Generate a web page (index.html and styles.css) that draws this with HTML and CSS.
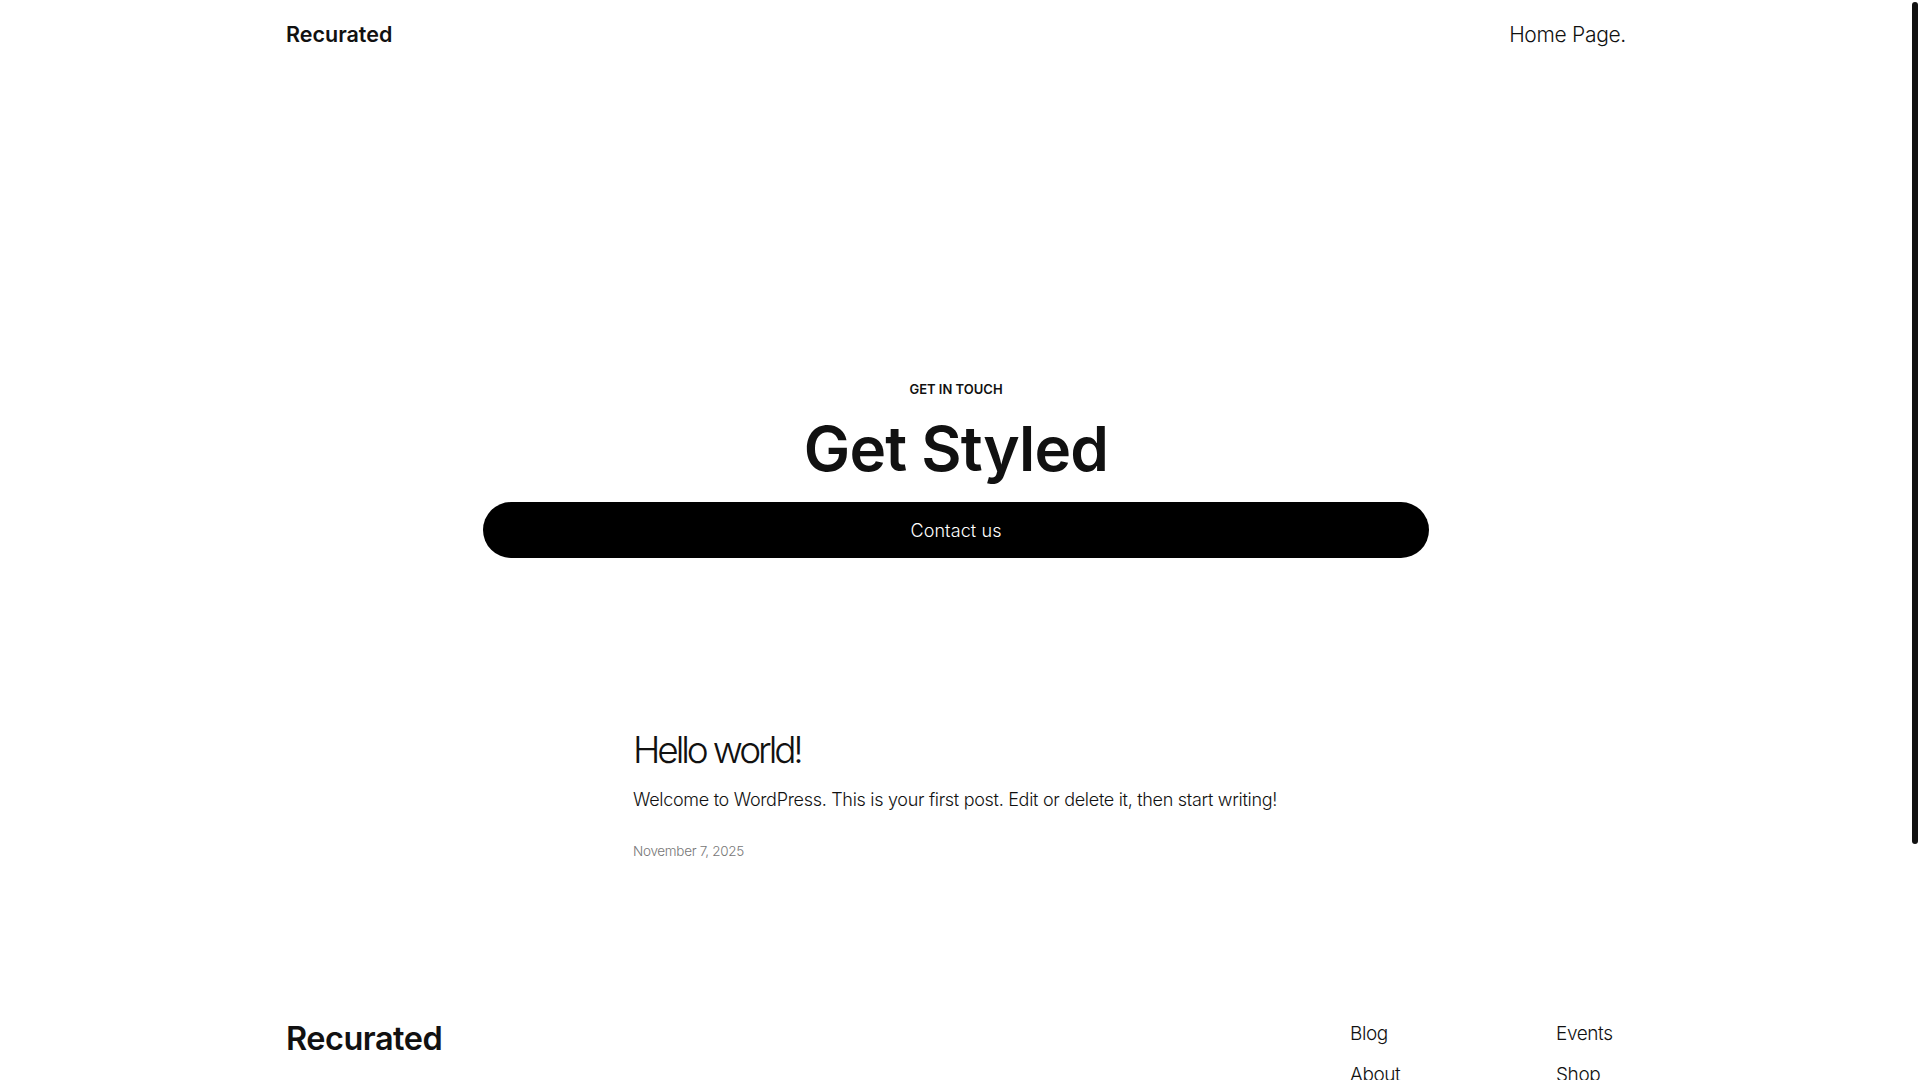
FILE: index.html
```html
<!DOCTYPE html>
<html>
<head>
  <title>Recurated</title>
  <link rel="stylesheet" href="styles.css">
</head>
<body>
  <!-- Header -->
  <header class="site-header">
    <a class="site-title" href="#">Recurated</a>
    <nav class="main-nav">
      <a href="#">Home Page.</a>
    </nav>
  </header>

  <main>
    <!-- Call to action -->
    <section class="hero">
      <p class="eyebrow">GET IN TOUCH</p>
      <h2 class="hero-title">Get Styled</h2>
      <a class="hero-button" href="#">Contact us</a>
    </section>

    <!-- Posts -->
    <section class="posts">
      <article class="post">
        <h2 class="post-title"><a href="#">Hello world!</a></h2>
        <p class="post-excerpt">Welcome to WordPress. This is your first post. Edit or delete it, then start writing!</p>
        <time class="post-date">November 7, 2025</time>
      </article>
    </section>
  </main>

  <!-- Footer -->
  <footer class="site-footer">
    <div class="footer-inner">
      <a class="footer-title" href="#">Recurated</a>
      <nav class="footer-nav">
        <a href="#">Blog</a>
        <a href="#">Events</a>
        <a href="#">About</a>
        <a href="#">Shop</a>
        <a href="#">FAQs</a>
        <a href="#">Patterns</a>
        <a href="#">Authors</a>
        <a href="#">Themes</a>
      </nav>
    </div>
    <p class="footer-credit">Designed with WordPress</p>
  </footer>

  <!-- page scrollbar -->
  <div class="scroll-thumb"></div>
</body>
</html>
```

FILE: styles.css
```css
body {
  margin: 0;
  padding-right: 8px;
  font-family: "Inter", "Noto Sans", sans-serif;
  color: #111;
  background: #fff;
}

a {
  color: inherit;
  text-decoration: none;
}

.site-header {
  max-width: 1340px;
  margin: 0 auto;
  height: 68px;
  display: flex;
  align-items: center;
  justify-content: space-between;
}

.site-title {
  font-size: 21.5px;
  font-weight: 600;
  letter-spacing: 0;
}

.main-nav a {
  font-size: 21px;
  font-weight: 300;
  letter-spacing: -0.3px;
}

.hero {
  display: flex;
  flex-direction: column;
  align-items: center;
  padding-top: 313px;
}

.eyebrow {
  margin: 0;
  font-size: 13px;
  line-height: 16px;
  font-weight: 600;
  letter-spacing: 0;
}

.hero-title {
  margin: 18px 0 0 0;
  font-size: 62px;
  line-height: 68px;
  font-weight: 600;
  letter-spacing: -0.8px;
}

.hero-button {
  margin-top: 19px;
  width: 946px;
  height: 56px;
  display: flex;
  align-items: center;
  justify-content: center;
  background: #000;
  color: #fff;
  border-radius: 999px;
  font-size: 18px;
  font-weight: 300;
  letter-spacing: 0.1px;
}

.posts {
  max-width: 646px;
  margin: 169px auto 0 auto;
}

.post-title {
  margin: 0;
  font-size: 37px;
  line-height: 46px;
  font-weight: 300;
  letter-spacing: -3.1px;
}

.post-excerpt {
  margin: 13px 0 0 0;
  font-size: 18px;
  line-height: 28px;
  font-weight: 300;
  letter-spacing: -0.3px;
}

.post-date {
  display: block;
  margin-top: 27px;
  font-size: 13.5px;
  line-height: 20px;
  font-weight: 300;
  color: #777;
  letter-spacing: -0.3px;
}

.site-footer {
  max-width: 1340px;
  margin: 157px auto 0 auto;
  padding-bottom: 60px;
}

.footer-inner {
  display: flex;
  justify-content: space-between;
  align-items: flex-start;
}

.footer-title {
  font-size: 32.5px;
  line-height: 41px;
  font-weight: 600;
  letter-spacing: -0.5px;
}

.footer-nav {
  display: grid;
  grid-template-columns: 206px 70px;
  row-gap: 12px;
  padding-top: 1px;
}

.footer-nav a {
  font-size: 19px;
  line-height: 29px;
  font-weight: 300;
  letter-spacing: -0.4px;
}

.footer-credit {
  margin: 60px 0 0 0;
  font-size: 14px;
  font-weight: 300;
  color: #777;
}

.scroll-thumb {
  position: fixed;
  top: 2px;
  right: 2px;
  width: 6px;
  height: 842px;
  background: #111;
  border-radius: 3px;
}
```
